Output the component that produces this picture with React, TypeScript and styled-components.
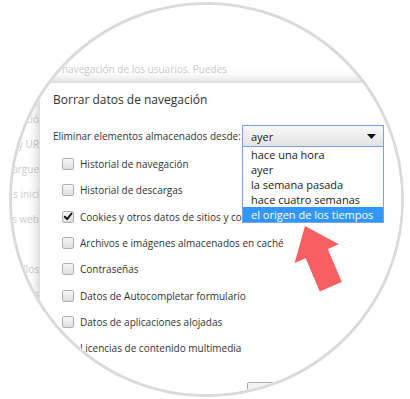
import React from "react";
import styled, { createGlobalStyle } from "styled-components";

const GlobalStyle = createGlobalStyle`
  html, body {
    margin: 0;
    padding: 0;
    background: #fff;
  }
  body {
    font-family: "Open Sans", "Noto Sans", Arial, sans-serif;
  }
`;

const Stage = styled.div`
  position: relative;
  width: 410px;
  height: 399px;
  box-sizing: border-box;
  padding: 2px 0 0 9px;
  overflow: hidden;
  background: #fff;
`;

const Lens = styled.div`
  width: 395px;
  height: 395px;
  box-sizing: border-box;
  border: 3px solid #dadada;
  border-radius: 50%;
  overflow: hidden;
`;

const Screen = styled.div`
  position: relative;
  width: 410px;
  height: 410px;
  margin: -5px 0 0 -12px;
  background: #fff;
`;

const PageBehind = styled.div`
  padding-top: 62px;
  color: #cbcbcb;
  font-size: 10px;
`;

const PageLead = styled.div`
  padding-left: 62px;
  line-height: 14px;
  white-space: nowrap;
`;

const PageAside = styled.div`
  width: 39px;
  margin-top: 31px;
  display: flex;
  flex-direction: column;
`;

const AsideRow = styled.div`
  height: 25px;
  line-height: 25px;
  display: flex;
  justify-content: flex-end;
  white-space: nowrap;
`;

const Dialog = styled.div`
  position: absolute;
  left: 40px;
  top: 83px;
  width: 400px;
  height: 340px;
  box-sizing: border-box;
  padding: 7px 0 0 13px;
  background: #fff;
  box-shadow: 0 0 12px rgba(0, 0, 0, 0.28);
  color: #333;
  font-size: 10px;
`;

const Title = styled.h2`
  margin: 0;
  font-size: 12px;
  font-weight: 400;
  line-height: 20px;
  white-space: nowrap;
`;

const FromRow = styled.div`
  display: grid;
  grid-template-columns: 189px 142px;
  align-items: center;
  height: 22px;
  margin-top: 15px;
  white-space: nowrap;
`;

const SelectBox = styled.div`
  position: relative;
  height: 22px;
  box-sizing: border-box;
  padding: 0 7px 0 8px;
  display: flex;
  align-items: center;
  justify-content: space-between;
  border: 1px solid #79a4e3;
  background: linear-gradient(#f7f7f7, #e4e4e4);
  color: #222;
  font-size: 11px;
`;

const OptionList = styled.ul`
  position: absolute;
  left: -1px;
  right: -1px;
  top: calc(100% + 1px);
  margin: 0;
  padding: 0;
  list-style: none;
  background: #fff;
  border: 1px solid #79a4e3;
  border-top: none;
  z-index: 2;
`;

const Option = styled.li<{ $active?: boolean }>`
  height: 15px;
  line-height: 15px;
  padding-left: 8px;
  white-space: nowrap;
  font-size: 11px;
  color: ${(p) => (p.$active ? "#fff" : "#222")};
  background: ${(p) => (p.$active ? "#3297fd" : "transparent")};
`;

const CheckList = styled.ul`
  margin: 4px 0 0;
  padding: 0;
  list-style: none;
`;

const CheckRow = styled.li`
  height: 26.3px;
  display: flex;
  align-items: center;
  gap: 6px;
  padding-left: 9px;
  white-space: nowrap;
`;

// labels that run under the open list are cut where the list starts
const Label = styled.span<{ $covered?: boolean }>`
  ${(p) => (p.$covered ? "max-width: 162px; overflow: hidden;" : "")}
`;

const Box = styled.span<{ $hidden?: boolean }>`
  width: 12px;
  height: 12px;
  flex: none;
  box-sizing: border-box;
  display: flex;
  align-items: center;
  justify-content: center;
  border: 1px solid ${(p) => (p.$hidden ? "transparent" : "#b0b0b0")};
  border-radius: 2px;
  background: ${(p) =>
    p.$hidden ? "transparent" : "linear-gradient(#f7f7f7, #dedede)"};
`;

const ButtonRow = styled.div`
  margin-top: 21px;
  padding-left: 194px;
`;

const Button = styled.div`
  display: inline-flex;
  align-items: center;
  height: 24px;
  padding: 0 12px;
  box-sizing: border-box;
  border: 1px solid #acacac;
  border-radius: 2px;
  background: linear-gradient(#f4f4f4, #e2e2e2);
  white-space: nowrap;
`;

const ArrowLayer = styled.svg`
  position: absolute;
  left: 0;
  top: 0;
  pointer-events: none;
`;

const options = [
  "hace una hora",
  "ayer",
  "la semana pasada",
  "hace cuatro semanas",
  "el origen de los tiempos",
];

const items: { label: string; checked?: boolean; plain?: boolean; covered?: boolean }[] = [
  { label: "Historial de navegación" },
  { label: "Historial de descargas" },
  { label: "Cookies y otros datos de sitios y complementos", checked: true, covered: true },
  { label: "Archivos e imágenes almacenados en caché" },
  { label: "Contraseñas" },
  { label: "Datos de Autocompletar formulario" },
  { label: "Datos de aplicaciones alojadas" },
  { label: "Licencias de contenido multimedia", plain: true },
];

// what shows of the page text left of the dialog
const asideWords = ["ció", "y UR", "argue", "s inici", "s web", "", "llos", "s"];

const Caret = () => (
  <svg width="9" height="5" viewBox="0 0 9 5">
    <path d="M0 0 H9 L4.5 5 Z" fill="#111" />
  </svg>
);

const Tick = () => (
  <svg width="11" height="11" viewBox="0 0 11 11">
    <path
      d="M2 5.8 L4.6 8.4 L9.4 2.2"
      fill="none"
      stroke="#111"
      strokeWidth="2.1"
      strokeLinecap="round"
      strokeLinejoin="round"
    />
  </svg>
);

export default function App() {
  return (
    <>
      <GlobalStyle />
      <Stage>
        <Lens>
          <Screen>
            <PageBehind>
              <PageLead>navegación de los usuarios. Puedes</PageLead>
              <PageAside>
                {asideWords.map((w, i) => (
                  <AsideRow key={i}>{w}</AsideRow>
                ))}
              </PageAside>
            </PageBehind>

            <Dialog>
              <Title>Borrar datos de navegación</Title>
              <FromRow>
                <span>Eliminar elementos almacenados desde:</span>
                <SelectBox>
                  <span>ayer</span>
                  <Caret />
                  <OptionList>
                    {options.map((o, i) => (
                      <Option key={o} $active={i === options.length - 1}>
                        {o}
                      </Option>
                    ))}
                  </OptionList>
                </SelectBox>
              </FromRow>
              <CheckList>
                {items.map((it) => (
                  <CheckRow key={it.label}>
                    <Box $hidden={it.plain}>{it.checked && <Tick />}</Box>
                    <Label $covered={it.covered}>{it.label}</Label>
                  </CheckRow>
                ))}
              </CheckList>
              <ButtonRow>
                <Button>Borrar datos de navegación</Button>
              </ButtonRow>
            </Dialog>
          </Screen>
        </Lens>

        <ArrowLayer width="410" height="399" viewBox="0 0 410 399">
          <polygon
            points="0,0 24,30 12,30 12,66 -12,66 -12,30 -24,30"
            fill="#f95f62"
            transform="translate(305 226) rotate(-23)"
          />
        </ArrowLayer>
      </Stage>
    </>
  );
}
